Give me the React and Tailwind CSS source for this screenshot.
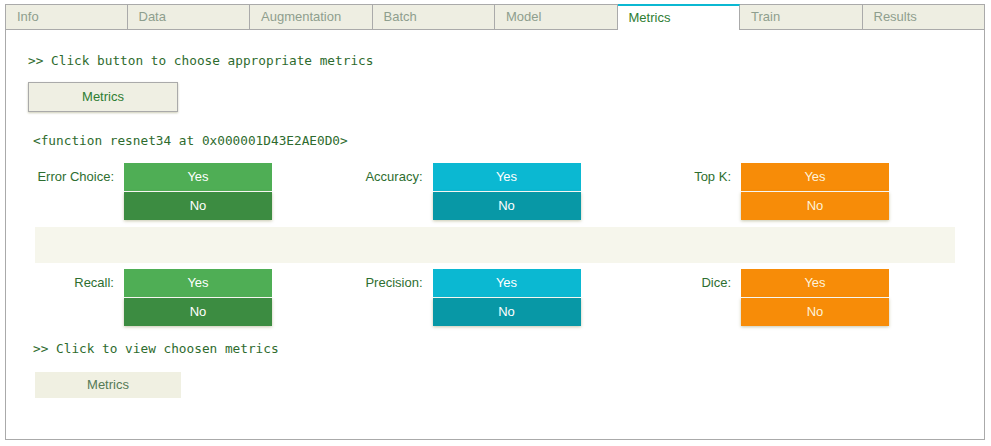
const tabs = ["Info", "Data", "Augmentation", "Batch", "Model", "Metrics", "Train", "Results"];

const palette = {
  green: { yes: "bg-[#4fae55] text-white", no: "bg-[#3c8c41] text-white" },
  cyan: { yes: "bg-[#0bb8d2] text-white", no: "bg-[#0898a6] text-white" },
  orange: { yes: "bg-[#f78c08] text-[#fdf3dc]", no: "bg-[#f78c08] text-[#fdf3dc]" },
};

const rowOne = [
  { label: "Error Choice:", color: "green" },
  { label: "Accuracy:", color: "cyan" },
  { label: "Top K:", color: "orange" },
];

const rowTwo = [
  { label: "Recall:", color: "green" },
  { label: "Precision:", color: "cyan" },
  { label: "Dice:", color: "orange" },
];

function Toggle({ label, color }) {
  const c = palette[color];
  return (
    <div className="flex w-[308.5px]">
      <div className="w-[81px] h-[28px] flex items-center justify-end text-[13px] text-[#2e6e30]">
        {label}
      </div>
      <div className="ml-[10px] w-[148px] flex flex-col gap-px">
        <button className={`h-[28px] text-[13px] ${c.yes}`}>Yes</button>
        <button className={`h-[28px] text-[13px] shadow-[0_1px_3px_rgba(130,130,70,0.45)] ${c.no}`}>
          No
        </button>
      </div>
    </div>
  );
}

export default function App() {
  return (
    <div className="w-[991px] h-[446px] bg-white font-['Liberation_Sans',Arial,sans-serif] pt-[4px] pl-[5px]">
      <div className="w-[980px]">
        {/* Tabs */}
        <div className="flex h-[26px]">
          {tabs.map((t, i) => {
            const active = t === "Metrics";
            return (
              <div
                key={t}
                className={`w-[122.5px] pl-[11px] flex items-center text-[13px] border-[#aaaaaa] ${
                  i === 0 ? "border-l" : ""
                } ${
                  active
                    ? "bg-white border-r border-t-2 border-t-[#0bb8d2] text-[#2e7d32]"
                    : "bg-[#eeeee2] border-t border-r border-b text-[#8e9e8e]"
                }`}
              >
                {t}
              </div>
            );
          })}
        </div>

        {/* Panel */}
        <div className="h-[410px] border border-t-0 border-[#aaaaaa] pt-[23px] pl-[22px]">
          <div className="font-['DejaVu_Sans_Mono',monospace] text-[12.75px] leading-[16px] text-[#2e6b2e]">
            &gt;&gt; Click button to choose appropriate metrics
          </div>
          <button className="mt-[13px] w-[150px] h-[30px] border border-[#aaaaaa] bg-[#efefe3] text-[13px] text-[#2e7d32] shadow-[0_1px_2px_rgba(130,130,70,0.4)]">
            Metrics
          </button>

          <div className="ml-[5px]">
            <div className="mt-[21px] font-['DejaVu_Sans_Mono',monospace] text-[12.75px] leading-[16px] text-[#2e6b2e]">
              &lt;function resnet34 at 0x000001D43E2AE0D0&gt;
            </div>

            <div className="mt-[14px] flex">
              {rowOne.map((m) => (
                <Toggle key={m.label} {...m} />
              ))}
            </div>

            <div className="mt-[7px] ml-[2px] w-[920px] h-[36px] bg-[#f6f6ec]" />

            <div className="mt-[6px] flex">
              {rowTwo.map((m) => (
                <Toggle key={m.label} {...m} />
              ))}
            </div>

            <div className="mt-[15px] font-['DejaVu_Sans_Mono',monospace] text-[12.75px] leading-[16px] text-[#2e6b2e]">
              &gt;&gt; Click to view choosen metrics
            </div>
            <button className="mt-[15px] ml-[2px] w-[146px] h-[26px] bg-[#f0f0e2] text-[13px] text-[#557a55]">
              Metrics
            </button>
          </div>
        </div>
      </div>
    </div>
  );
}
